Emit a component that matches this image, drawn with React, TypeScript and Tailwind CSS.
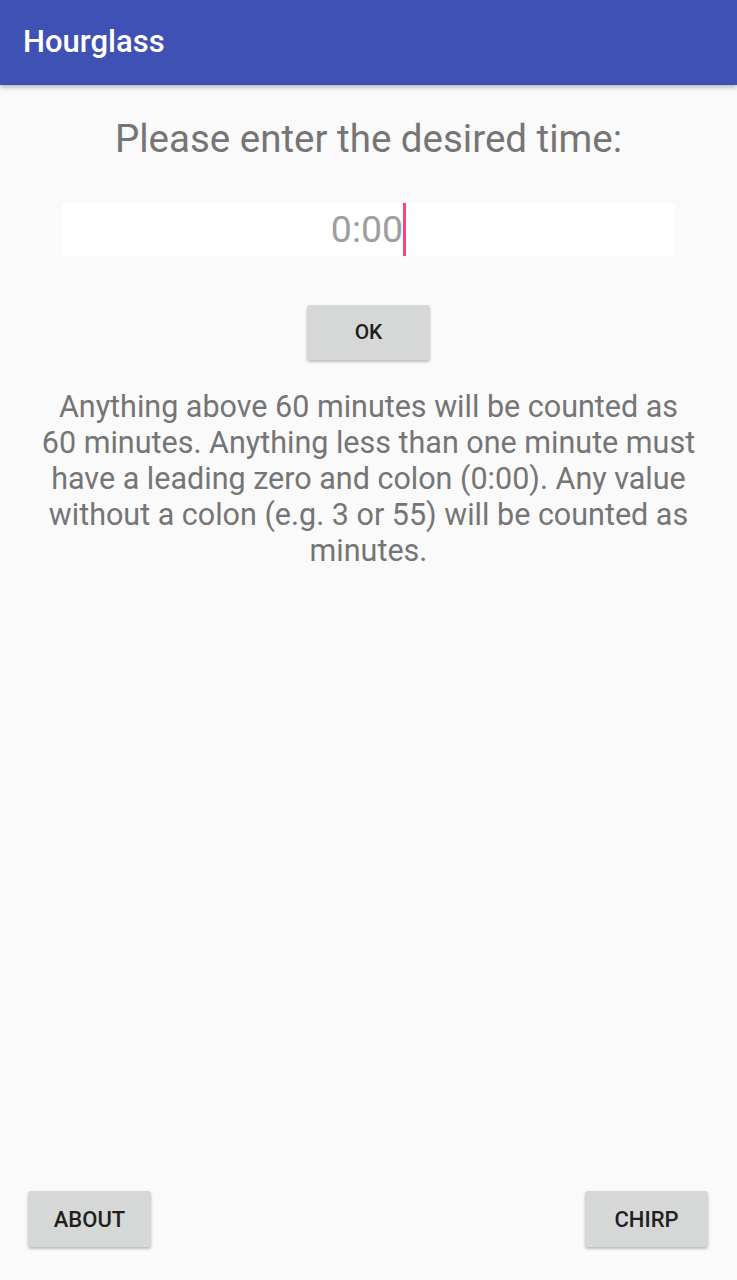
export default function App() {
  return (
    <div className="flex h-[1280px] flex-col bg-[#fafafa] font-['Roboto',sans-serif]">
      {/* App bar */}
      <div className="z-10 flex h-[85px] shrink-0 items-center bg-[#3f51b5] px-[23px] shadow-[0_2px_5px_rgba(0,0,0,0.3)]">
        <h1 className="text-[31px] font-medium text-white">Hourglass</h1>
      </div>

      <div className="flex flex-1 flex-col items-center">
        <p className="mt-[28px] text-[38.5px] leading-[52px] text-[#757575]">Please enter the desired time:</p>

        {/* Time input */}
        <div className="mt-[38px] flex h-[53px] w-[613px] items-center justify-center bg-white">
          <span className="text-[37.5px] leading-none text-[#9e9e9e]">0:00</span>
          <span className="h-[53px] w-[3px] bg-[#ff4081]" />
        </div>

        <button className="mt-[49px] h-[55px] w-[123px] rounded-[3px] bg-[#d6d7d7] text-[21px] font-medium text-[#1f1f1f] shadow-[0_2px_3px_rgba(0,0,0,0.25)]">
          OK
        </button>

        <p className="mt-[29px] w-[680px] text-center text-[30.5px] leading-[36px] text-[#757575]">
          Anything above 60 minutes will be counted as
          <br />
          60 minutes. Anything less than one minute must
          <br />
          have a leading zero and colon (0:00). Any value
          <br />
          without a colon (e.g. 3 or 55) will be counted as
          <br />
          minutes.
        </p>
      </div>

      {/* Bottom buttons */}
      <div className="flex justify-between pb-[33px] pl-[28px] pr-[29px]">
        <button className="h-[56px] w-[123px] rounded-[3px] bg-[#d6d7d7] text-[22px] font-medium text-[#1f1f1f] shadow-[0_2px_3px_rgba(0,0,0,0.25)]">
          ABOUT
        </button>
        <button className="h-[56px] w-[123px] rounded-[3px] bg-[#d6d7d7] text-[22px] font-medium text-[#1f1f1f] shadow-[0_2px_3px_rgba(0,0,0,0.25)]">
          CHIRP
        </button>
      </div>
    </div>
  );
}
